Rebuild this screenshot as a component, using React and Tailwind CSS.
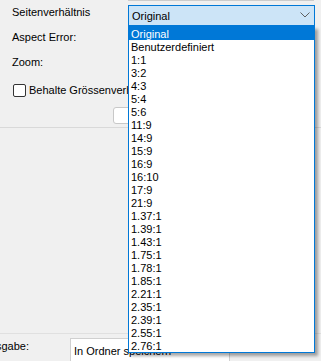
import React from "react";

const items = [
  "Original", "Benutzerdefiniert", "1:1", "3:2", "4:3", "5:4", "5:6", "11:9", "14:9", "15:9",
  "16:9", "16:10", "17:9", "21:9", "1.37:1", "1.39:1", "1.43:1", "1.75:1", "1.78:1", "1.85:1",
  "2.21:1", "2.35:1", "2.39:1", "2.55:1", "2.76:1",
];

export default function App() {
  return (
    <div
      className="relative w-[321px] h-[361px] overflow-hidden bg-[#f0f0f0] text-[11px] text-black"
      style={{ fontFamily: "'Liberation Sans', Arial, sans-serif" }}
    >
      <div className="flex flex-col h-full">
        <div className="ml-[128px] w-[186px] h-px bg-[#cccccc]" />
        {/* Seitenverhältnis row */}
        <div className="flex items-start mt-[4px] h-[21px]">
          <div className="w-[128px] pl-[12px] leading-[16px] -mt-px">Seitenverhältnis</div>
          <div className="w-[187px] h-[21px] border border-[#0078d7] bg-[#cce4f7] flex items-center justify-between pl-[3px] pr-[4px] pt-[1px]">
            <span className="leading-[16px]">Original</span>
            <svg width="10" height="6" viewBox="0 0 10 6" className="-mt-[2px]">
              <polyline points="0.5,0.5 5,5 9.5,0.5" fill="none" stroke="#5f5f5f" strokeWidth="1" />
            </svg>
          </div>
        </div>
        <div className="pl-[12px] mt-[3px] h-[16px] leading-[16px]">Aspect Error:</div>
        <div className="pl-[12px] mt-[9px] h-[16px] leading-[16px]">Zoom:</div>
        <div className="flex items-center pl-[13px] mt-[12px] h-[16px] gap-[3px]">
          <div className="w-[13px] h-[13px] shrink-0 border border-[#333333] rounded-[2px] bg-white" />
          <span className="whitespace-nowrap leading-[16px]">Behalte Grössenverhältnis</span>
        </div>
        <div className="ml-[113px] mt-[9px] w-[110px] h-[17px] bg-white border border-[#c8c8c8] rounded-[3px]" />
        <div className="mt-[3px] h-px bg-[#d9d9d9]" />
        <div className="flex-1" />
        <div className="h-px bg-[#e0e0e0]" />
        <div className="flex items-start h-[27px]">
          <div className="w-[29px] shrink-0 flex justify-end overflow-hidden whitespace-nowrap mt-[4px] leading-[16px]">
            <span>Ausgabe:</span>
          </div>
          <div className="ml-[41px] mt-[4px] w-[160px] h-[30px] bg-white border border-[#d0d0d0] pl-[3px] pt-[4px] leading-[16px] whitespace-nowrap">
            In Ordner speichern
          </div>
        </div>
      </div>

      {/* Dropdown overlay */}
      <div className="absolute left-[128px] top-[26px] w-[187px] h-[327px] bg-white border border-[#0078d7] shadow-[3px_3px_3px_rgba(0,0,0,0.35)]">
        {items.map((it, i) => (
          <div
            key={it}
            className={
              i === 0
                ? "h-[13px] leading-[14px] pl-[2px] bg-[#0078d7] text-white whitespace-nowrap"
                : "h-[13px] leading-[14px] pl-[2px] whitespace-nowrap"
            }
          >
            {it}
          </div>
        ))}
      </div>
    </div>
  );
}
